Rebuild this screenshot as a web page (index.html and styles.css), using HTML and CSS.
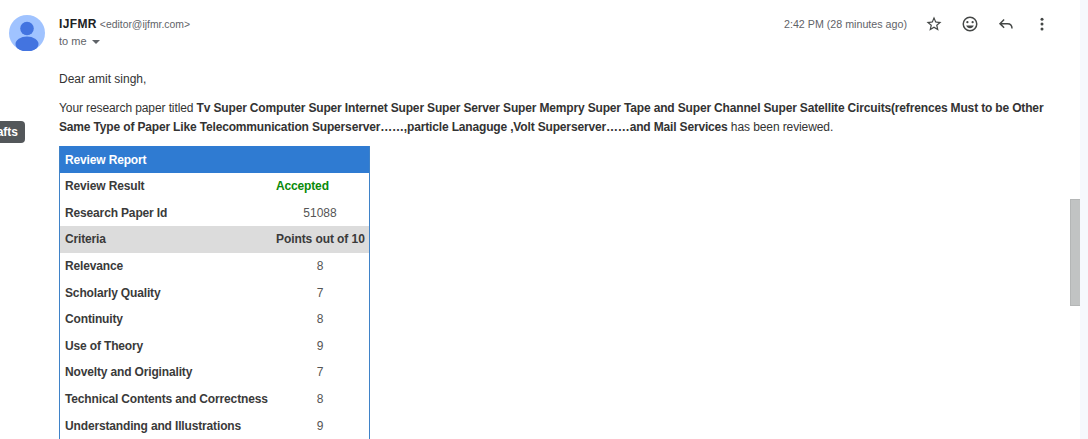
FILE: index.html
```html
<!DOCTYPE html>
<html lang="en">
<head>
<meta charset="utf-8">
<title>Review Report</title>
<link rel="stylesheet" href="styles.css">
</head>
<body>
<div class="tooltip">Drafts</div>
<main class="message">
  <header class="head">
    <svg class="avatar" viewBox="0 0 36 36" aria-hidden="true">
      <circle cx="18" cy="18" r="18" fill="#a0c3ff"/>
      <circle cx="18" cy="13.5" r="6.8" fill="#4374e0"/>
      <ellipse cx="18" cy="29" rx="11.5" ry="7.5" fill="#4374e0"/>
    </svg>
    <div class="who">
      <div class="from"><b>IJFMR</b> <span class="addr">&lt;editor@ijfmr.com&gt;</span></div>
      <div class="to">to me <span class="caret"></span></div>
    </div>
    <div class="meta">
      <span class="time">2:42 PM (28 minutes ago)</span>
      <svg class="icon star" viewBox="0 0 24 24" aria-hidden="true"><path d="M22 9.24l-7.19-.62L12 2 9.19 8.63 2 9.24l5.46 4.73L5.82 21 12 17.27 18.18 21l-1.63-7.03L22 9.24zM12 15.4l-3.76 2.27 1-4.28-3.32-2.88 4.38-.38L12 6.1l1.71 4.04 4.38.38-3.32 2.88 1 4.28L12 15.4z"/></svg>
      <svg class="icon emoji" viewBox="0 0 24 24" aria-hidden="true"><path d="M12 2a10 10 0 1 0 0 20 10 10 0 0 0 0-20zm0 18a8 8 0 1 1 0-16 8 8 0 0 1 0 16z"/><circle cx="15.5" cy="9.5" r="1.5"/><circle cx="8.5" cy="9.5" r="1.5"/><path d="M12 17.5c2.33 0 4.31-1.46 5.11-3.5H6.89c.8 2.04 2.78 3.5 5.11 3.5z"/></svg>
      <svg class="icon reply" viewBox="0 0 24 24" aria-hidden="true"><path d="M9.5 6 4 11.5 9.500 17M4.500 11.500H14c4 0 6 2.500 6 6.500"/></svg>
      <svg class="icon more" viewBox="0 0 24 24" aria-hidden="true"><circle cx="12" cy="5.500" r="2"/><circle cx="12" cy="12" r="2"/><circle cx="12" cy="18.500" r="2"/></svg>
    </div>
  </header>
  <div class="body">
    <p class="greet">Dear amit singh,</p>
    <p class="intro">Your research paper titled <b>Tv Super Computer Super Internet Super Super Server Super Mempry Super Tape and Super Channel Super Satellite Circuits(refrences Must to be Other Same Type of Paper Like Telecommunication Superserver……,particle Lanaguge ,Volt Superserver……and Mail Services</b> has been reviewed.</p>
    <section class="report">
      <h2 class="report-title">Review Report</h2>
      <div class="row"><span class="label">Review Result</span><span class="value accepted">Accepted</span></div>
      <div class="row"><span class="label">Research Paper Id</span><span class="value id">51088</span></div>
      <div class="row shaded"><span class="label">Criteria</span><span class="value points">Points out of 10</span></div>
      <div class="row"><span class="label">Relevance</span><span class="value">8</span></div>
      <div class="row"><span class="label">Scholarly Quality</span><span class="value">7</span></div>
      <div class="row"><span class="label">Continuity</span><span class="value">8</span></div>
      <div class="row"><span class="label">Use of Theory</span><span class="value">9</span></div>
      <div class="row"><span class="label">Novelty and Originality</span><span class="value">7</span></div>
      <div class="row"><span class="label">Technical Contents and Correctness</span><span class="value">8</span></div>
      <div class="row"><span class="label">Understanding and Illustrations</span><span class="value">9</span></div>
      <div class="row"></div>
    </section>
  </div>
</main>
<div class="scrollbar"></div>
<aside class="strip"></aside>
</body>
</html>
```
FILE: styles.css
```css
* { box-sizing: border-box; }
html, body { height: 100%; }
body {
  margin: 0;
  display: flex;
  height: 439px;
  overflow: hidden;
  background: #fff;
  font-family: "Liberation Sans", Arial, sans-serif;
  font-size: 12px;
  color: #333;
}
.message { flex: 1; min-width: 0; padding: 15px 0 0 9px; overflow: hidden; }
.strip { width: 8px; background: #f6f8fc; }
.scrollbar {
  position: absolute;
  left: 1070px;
  top: 199px;
  width: 10px;
  height: 107px;
  background: #c1c3c3;
  border: 1px solid #b4b6b6;
  border-right: 0;
}
.tooltip {
  position: absolute;
  right: 1063px;
  top: 121px;
  height: 22px;
  padding: 0 7px;
  line-height: 22px;
  background: #53575a;
  color: #fff;
  border-radius: 4px;
  font-weight: bold;
  font-size: 12px;
}
.head { display: flex; align-items: flex-start; }
.avatar { width: 36px; height: 36px; flex: none; }
.who { margin-left: 14px; height: 36px; }
.from { height: 18px; line-height: 18px; color: #5f6368; font-size: 11px; }
.from b { color: #202124; font-size: 12px; letter-spacing: .35px; }
.addr { color: #5f6368; font-size: 10.4px; }
.to { line-height: 16px; color: #5f6368; font-size: 11px; }
.caret {
  display: inline-block;
  margin-left: 2px;
  vertical-align: 1px;
  border: 4px solid transparent;
  border-top: 4px solid #5f6368;
  border-bottom: 0;
}
.meta {
  margin-left: auto;
  margin-right: 29px;
  display: flex;
  align-items: center;
  height: 18px;
}
.time { color: #5f6368; font-size: 10.7px; margin-right: 18px; }
.icon { width: 18px; height: 18px; fill: #444746; flex: none; }
.emoji, .reply, .more { margin-left: 18px; }
.reply { fill: none; stroke: #444746; stroke-width: 2; }
.body { margin: 0 0 0 50px; padding-right: 25px; }
.greet { margin: 19px 0 0; line-height: 18px; }
.intro { margin: 11px 0 0; line-height: 18.5px; letter-spacing: -.1px; }
.intro b { letter-spacing: -.16px; }
.report {
  width: 311px;
  margin-top: 10px;
  border: 1px solid #3f82c8;
  border-top: 0;
  border-bottom: 0;
}
.report-title {
  margin: 0;
  height: 26.9px;
  padding-left: 5px;
  line-height: 28px;
  font-size: 12px;
  font-weight: bold;
  letter-spacing: -.15px;
  color: #fff;
  background: #2f7bd2;
}
.row { display: flex; align-items: center; height: 26.6px; }
.label {
  width: 215px;
  padding-left: 5px;
  font-weight: bold;
  letter-spacing: -.15px;
  flex: none;
  color: #3a3a3a;
  white-space: nowrap;
}
.value { flex: 1; text-align: center; color: #555; white-space: nowrap; margin-left: -4px; }
.accepted { font-weight: bold; letter-spacing: -.15px; color: #0a8a0a; text-align: left; margin-left: 1px; }
.shaded { background: #dcdcdc; }
.points { font-weight: bold; letter-spacing: -.08px; text-align: left; margin-left: 1px; color: #3a3a3a; }
```
